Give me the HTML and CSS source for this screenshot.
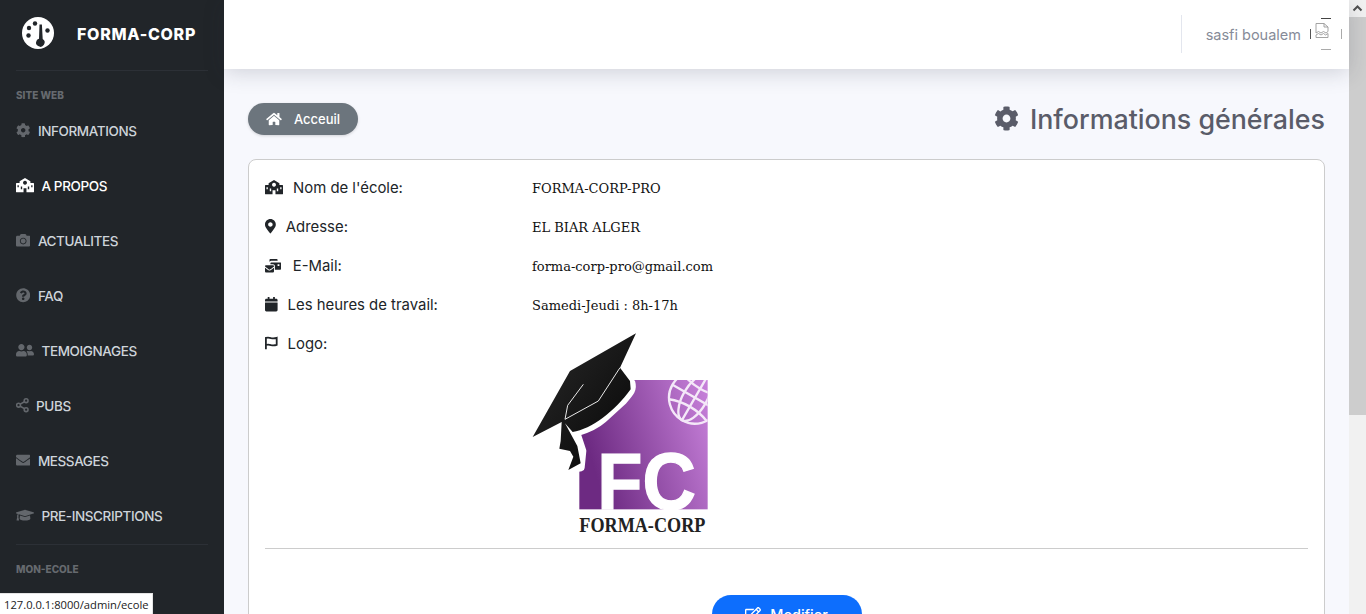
FILE: index.html
```html
<!DOCTYPE html>
<html>
<head>
	<title>Informations générales</title>
	<meta charset="UTF-8">
	<link rel="stylesheet" href="styles.css">
</head>
<body>
	<svg class="sprite">
		<symbol id="i-cog" viewBox="0 0 512 512"><path d="M487.4 315.7l-42.6-24.6c4.3-23.2 4.3-47 0-70.2l42.6-24.6c4.9-2.8 7.1-8.6 5.5-14-11.1-35.6-30-67.8-54.7-94.6-3.8-4.1-10-5.1-14.8-2.3L380.8 110c-17.9-15.4-38.5-27.3-60.8-35.1V25.8c0-5.6-3.9-10.5-9.4-11.7-36.7-8.2-74.3-7.8-109.2 0-5.5 1.2-9.4 6.1-9.4 11.7V75c-22.2 7.9-42.8 19.8-60.8 35.1L88.7 85.5c-4.9-2.8-11-1.9-14.8 2.3-24.7 26.7-43.6 58.9-54.7 94.6-1.7 5.4.6 11.2 5.5 14L67.3 221c-4.3 23.2-4.3 47 0 70.2l-42.6 24.6c-4.9 2.8-7.1 8.6-5.5 14 11.1 35.6 30 67.8 54.7 94.6 3.8 4.1 10 5.1 14.8 2.3l42.6-24.6c17.9 15.4 38.5 27.3 60.8 35.1v49.2c0 5.6 3.9 10.5 9.4 11.7 36.7 8.2 74.3 7.8 109.2 0 5.5-1.2 9.4-6.1 9.4-11.7v-49.2c22.2-7.9 42.8-19.8 60.8-35.1l42.6 24.6c4.9 2.8 11 1.9 14.8-2.3 24.7-26.7 43.6-58.9 54.7-94.6 1.5-5.5-.7-11.3-5.6-14.1zM256 336c-44.1 0-80-35.9-80-80s35.9-80 80-80 80 35.9 80 80-35.9 80-80 80z"/></symbol>
		<symbol id="i-school" viewBox="0 0 640 512"><path fill-rule="evenodd" d="M320 0L512 112V176H624a16 16 0 0 1 16 16V496a16 16 0 0 1-16 16H16a16 16 0 0 1-16-16V192a16 16 0 0 1 16-16H128V112zM320 96a70 70 0 1 0 .1 0zM268 368V512H372V368zM52 256V330H100V256zM540 256V330H588V256zM170 300V400H220V300zM420 300V400H470V300z"/></symbol>
	</svg>

	<aside class="sidebar">
		<div class="brand">
			<svg class="brand-logo" viewBox="0 0 32 32">
				<circle cx="16" cy="16" r="16" fill="#fff"/>
				<g fill="#212529">
					<circle cx="13" cy="6.500" r="2.200"/>
					<circle cx="7" cy="11" r="2.200"/>
					<circle cx="6.500" cy="18.500" r="2.200"/>
					<circle cx="25.500" cy="13.500" r="2.200"/>
					<path d="M17.500 7.500h2.400l.8 14.500a4.200 4.200 0 1 1-6 1.400c.6-1 1.600-1.500 2.300-1.700z"/>
				</g>
			</svg>
			<span class="brand-name">FORMA-CORP</span>
		</div>

		<div class="side-label">SITE WEB</div>
		<a class="side-link"><svg class="ico w-16"><use href="#i-cog"/></svg>INFORMATIONS</a>
		<a class="side-link active"><svg class="ico w-20"><use href="#i-school"/></svg>A PROPOS</a>
		<a class="side-link"><svg class="ico w-16" viewBox="0 0 512 512"><path d="M512 144v288c0 26.5-21.5 48-48 48H48c-26.5 0-48-21.5-48-48V144c0-26.5 21.5-48 48-48h88l12.3-32.9c7-18.7 24.9-31.1 44.9-31.1h125.5c20 0 37.9 12.4 44.9 31.1L376 96h88c26.5 0 48 21.5 48 48zM376 288c0-66.2-53.8-120-120-120s-120 53.8-120 120 53.8 120 120 120 120-53.8 120-120zm-32 0c0 48.5-39.5 88-88 88s-88-39.5-88-88 39.5-88 88-88 88 39.5 88 88z"/></svg>ACTUALITES</a>
		<a class="side-link"><svg class="ico w-16" viewBox="0 0 512 512"><path d="M504 256c0 136.997-111.043 248-248 248S8 392.997 8 256C8 119.083 119.043 8 256 8s248 111.083 248 248zM262.655 90c-54.497 0-89.255 22.957-116.549 63.758-3.536 5.286-2.353 12.415 2.715 16.258l34.699 26.31c5.205 3.947 12.621 3.008 16.665-2.122 17.864-22.658 30.113-35.797 57.303-35.797 20.429 0 45.698 13.148 45.698 32.958 0 14.976-12.363 22.667-32.534 33.976C247.128 238.528 216 254.941 216 296v4c0 6.627 5.373 12 12 12h56c6.627 0 12-5.373 12-12v-1.333c0-28.462 83.186-29.647 83.186-106.667 0-58.002-60.165-102-116.531-102zM256 338c-25.365 0-46 20.635-46 46 0 25.364 20.635 46 46 46s46-20.636 46-46c0-25.365-20.635-46-46-46z"/></svg>FAQ</a>
		<a class="side-link"><svg class="ico w-20" viewBox="0 0 640 512"><path d="M192 256c61.9 0 112-50.1 112-112S253.9 32 192 32 80 82.1 80 144s50.1 112 112 112zm76.8 32h-8.3c-20.8 10-43.9 16-68.5 16s-47.6-6-68.5-16h-8.3C51.6 288 0 339.6 0 403.2V432c0 26.5 21.5 48 48 48h288c26.5 0 48-21.5 48-48v-28.8c0-63.6-51.6-115.2-115.2-115.2zM480 256c53 0 96-43 96-96s-43-96-96-96-96 43-96 96 43 96 96 96zm48 32h-3.8c-13.9 4.8-28.6 8-44.2 8s-30.3-3.2-44.2-8H432c-20.4 0-39.2 5.9-55.7 15.4 24.4 26.3 39.7 61.2 39.7 99.8v38.4c0 2.2-.5 4.3-.6 6.4H592c26.5 0 48-21.5 48-48 0-61.9-50.1-112-112-112z"/></svg>TEMOIGNAGES</a>
		<a class="side-link"><svg class="ico ico-line w-14" viewBox="0 0 448 512" stroke="currentColor" stroke-width="56"><circle cx="360" cy="96" r="68"/><circle cx="90" cy="256" r="68"/><circle cx="360" cy="416" r="68"/><path d="M150 220L300 132M150 292l150 88"/></svg>PUBS</a>
		<a class="side-link"><svg class="ico w-16" viewBox="0 0 512 512"><path d="M502.3 190.8c3.9-3.1 9.7-.2 9.7 4.7V400c0 26.5-21.5 48-48 48H48c-26.5 0-48-21.5-48-48V195.6c0-5 5.7-7.8 9.7-4.7 22.4 17.4 52.1 39.5 154.1 113.6 21.1 15.4 56.7 47.8 92.2 47.6 35.7.3 72-32.8 92.3-47.6 102-74.1 131.6-96.3 154-113.7zM256 320c23.2.4 56.6-29.2 73.4-41.4 132.7-96.3 142.8-104.7 173.4-128.7 5.8-4.5 9.2-11.5 9.2-18.9v-19c0-26.5-21.5-48-48-48H48C21.5 64 0 85.5 0 112v19c0 7.4 3.4 14.3 9.2 18.9 30.6 23.9 40.7 32.4 173.4 128.7 16.8 12.2 50.2 41.8 73.4 41.4z"/></svg>MESSAGES</a>
		<a class="side-link"><svg class="ico w-20" viewBox="0 0 640 512"><path d="M622.34 153.2L343.4 67.5c-15.2-4.67-31.6-4.67-46.79 0L17.66 153.2c-23.54 7.23-23.54 38.36 0 45.59l48.63 14.94c-10.67 13.19-17.23 29.28-17.88 46.9C38.78 266.15 32 276.11 32 288c0 10.78 5.68 19.85 13.86 25.65L20.33 428.53C18.11 438.52 25.71 448 35.94 448h56.11c10.24 0 17.84-9.48 15.62-19.47L82.14 313.65C90.32 307.85 96 298.78 96 288c0-11.57-6.47-21.25-15.66-26.87.76-15.02 8.44-28.3 20.69-36.72L296.6 284.5c9.06 2.78 26.44 6.25 46.79 0l278.95-85.7c23.55-7.24 23.55-38.36 0-45.6zM352.79 315.09c-28.53 8.76-52.84 3.92-65.59 0l-145.02-44.55L128 384c0 35.35 85.96 64 192 64s192-28.65 192-64l-14.18-113.47-145.03 44.56z"/></svg>PRE-INSCRIPTIONS</a>
		<hr class="side-rule">
		<div class="side-label">MON-ECOLE</div>
	</aside>

	<div class="main">
		<header class="topbar">
			<div class="user">
				<span class="user-name">sasfi boualem</span>
				<svg class="avatar" viewBox="0 0 34 34">
					<path d="M13 1.500h10" stroke="#444"/>
					<path d="M13 32.500h10" stroke="#aaa"/>
					<path d="M2.500 12v10" stroke="#555"/>
					<path d="M33.500 12v10" stroke="#aaa"/>
					<path d="M8 6.500h8l4 3.500v4.500l-2 1.500-2.500-1.500-2.500 1.500-2.500-1.500-2.500 1.500zM16 6.500v3.500h4M8 18l2.500-1.500 2.500 1.500 2.500-1.500 2 1.500 2.500-1.500v4h-12z" fill="#fff" stroke="#9a9a9a" stroke-width=".9"/>
				</svg>
			</div>
		</header>

		<main class="content">
			<div class="page-head">
				<a class="crumb">
					<svg class="ico crumb-ico" viewBox="0 0 576 512"><path d="M280.37 148.26L96 300.11V464a16 16 0 0 0 16 16l112.06-.29a16 16 0 0 0 15.92-16V368a16 16 0 0 1 16-16h64a16 16 0 0 1 16 16v95.64a16 16 0 0 0 16 16.05L464 480a16 16 0 0 0 16-16V300L295.67 148.26a12.19 12.19 0 0 0-15.3 0zM571.6 251.47L488 182.56V44.05a12 12 0 0 0-12-12h-56a12 12 0 0 0-12 12v72.61L318.47 43a48 48 0 0 0-61 0L4.34 251.47a12 12 0 0 0-1.6 16.9l25.5 31A12 12 0 0 0 45.15 301l235.22-193.74a12.19 12.19 0 0 1 15.3 0L530.9 301a12 12 0 0 0 16.9-1.6l25.5-31a12 12 0 0 0-1.7-16.93z"/></svg>
					Acceuil
				</a>
				<h1 class="page-title"><svg class="ico title-ico"><use href="#i-cog"/></svg>Informations générales</h1>
			</div>

			<section class="card">
				<div class="info-row">
					<div class="info-label"><svg class="ico w-20"><use href="#i-school"/></svg>Nom de l'école:</div>
					<div class="info-value">FORMA-CORP-PRO</div>
				</div>
				<div class="info-row">
					<div class="info-label"><svg class="ico w-12" viewBox="0 0 384 512"><path d="M172.268 501.67C26.97 291.031 0 269.413 0 192 0 85.961 85.961 0 192 0s192 85.961 192 192c0 77.413-26.97 99.031-172.268 309.67-9.535 13.774-29.93 13.773-39.464 0zM192 272c44.183 0 80-35.817 80-80s-35.817-80-80-80-80 35.817-80 80 35.817 80 80 80z"/></svg>Adresse:</div>
					<div class="info-value">EL BIAR ALGER</div>
				</div>
				<div class="info-row">
					<div class="info-label wide-gap"><svg class="ico w-18" viewBox="0 0 576 512"><path d="M160 448c-25.600 0-51.200-22.400-64-32-64-44.800-83.200-60.800-96-70.400V480c0 17.670 14.330 32 32 32h256c17.670 0 32-14.330 32-32V345.600c-12.800 9.600-32 25.600-96 70.400-12.800 9.600-38.400 32-64 32zm128-192H32c-17.670 0-32 14.330-32 32v16c25.600 19.200 22.400 19.200 115.200 86.400 9.600 6.400 28.800 25.600 44.800 25.600s35.200-19.200 44.800-22.400c92.800-67.200 89.600-67.200 115.200-89.600V288c0-17.670-14.330-32-32-32zm256-96H224c-17.670 0-32 14.330-32 32v32h96c33.210 0 60.590 25.420 63.710 57.820l.29-.220V416h192c17.670 0 32-14.330 32-32V192c0-17.670-14.330-32-32-32zm-32 128h-64v-64h64v64zM160 160c0-35.300 28.700-64 64-64h224V64c0-17.670-14.330-32-32-32H192c-17.670 0-32 14.330-32 32z"/></svg>E-Mail:</div>
					<div class="info-value">forma-corp-pro@gmail.com</div>
				</div>
				<div class="info-row">
					<div class="info-label"><svg class="ico w-14" viewBox="0 0 448 512"><path d="M12 192h424c6.600 0 12 5.400 12 12v260c0 26.500-21.500 48-48 48H48c-26.500 0-48-21.500-48-48V204c0-6.600 5.400-12 12-12zm436-44v-36c0-26.500-21.500-48-48-48h-48V12c0-6.600-5.400-12-12-12h-40c-6.600 0-12 5.400-12 12v52H160V12c0-6.600-5.400-12-12-12h-40c-6.600 0-12 5.400-12 12v52H48C21.500 64 0 85.500 0 112v36c0 6.600 5.400 12 12 12h424c6.600 0 12-5.400 12-12z"/></svg>Les heures de travail:</div>
					<div class="info-value">Samedi-Jeudi : 8h-17h</div>
				</div>
				<div class="info-row logo-row">
					<div class="info-label"><svg class="ico ico-line w-14" viewBox="0 0 448 512" stroke="currentColor" stroke-width="64"><path d="M32 470V70c60-20 120-12 186 4 70 14 130 10 198-10v250c-66 20-128 24-198 10-70-18-126-26-186-4"/></svg>Logo:</div>
					<div class="info-value">
						<svg class="logo-pic" viewBox="36 21 528 609">
							<defs>
								<linearGradient id="fc-grad" x1="0" x2="1" y1="0.3" y2="0">
									<stop offset="0" stop-color="#6d2a82"/>
									<stop offset="1" stop-color="#c882db"/>
								</linearGradient>
								<linearGradient id="cap-grad" x1="0" x2="1" y1="0" y2="1">
									<stop offset="0" stop-color="#2a2a2a"/>
									<stop offset="1" stop-color="#050505"/>
								</linearGradient>
								<clipPath id="fc-clip"><rect x="178" y="162" width="385" height="388"/></clipPath>
							</defs>
							<rect x="178" y="162" width="385" height="388" fill="url(#fc-grad)"/>
							<g clip-path="url(#fc-clip)">
								<g transform="rotate(30 525 215)" fill="none" stroke="#f4e8f8" stroke-width="7">
									<circle cx="525" cy="215" r="78"/>
									<ellipse cx="525" cy="215" rx="36" ry="78"/>
									<path d="M447 215h156M525 137v156M460 172c40 16 90 16 130 0M460 258c40-16 90-16 130 0"/>
								</g>
							</g>
							<path d="M300 125l35 45c6 20-3 30-25 55l-60 55c-25 22-55 33-80 40l18 55 -5 50-38 7 12-70-32-30z" fill="#fff" stroke="#fff" stroke-width="22" stroke-linejoin="round"/>
							<path d="M348 22L150 135 38 333 125 288 122 345 118 368 150 375 160 392 145 432 182 412 172 360 135 292 158 318C215 310 285 255 332 190L330 165 300 125z" fill="url(#cap-grad)"/>
							<path d="M190 175L143 238 135 280 235 225 300 125" fill="none" stroke="#e8e8e8" stroke-width="3"/>
							<text class="logo-fc" x="232" y="550" textLength="296" lengthAdjust="spacingAndGlyphs">FC</text>
							<text class="logo-name" x="178" y="618" textLength="378" lengthAdjust="spacingAndGlyphs">FORMA-CORP</text>
						</svg>
					</div>
				</div>
				<hr class="card-rule">
				<div class="card-actions">
					<a class="btn-edit"><svg class="ico btn-ico" viewBox="0 0 576 512"><path d="M402.3 344.900l32-32c5-5 13.700-1.500 13.700 5.700V464c0 26.500-21.500 48-48 48H48c-26.500 0-48-21.500-48-48V112c0-26.500 21.500-48 48-48h273.500c7.100 0 10.700 8.600 5.700 13.700l-32 32c-1.500 1.500-3.500 2.300-5.700 2.300H48v352h352V350.500c0-2.100.8-4.100 2.300-5.600zm156.600-201.800L296.300 405.700l-90.400 10c-26.200 2.900-48.500-19.200-45.600-45.600l10-90.400L432.900 17.100c22.900-22.900 59.900-22.900 82.700 0l43.200 43.200c22.900 22.900 22.900 60 .1 82.800zM460.100 174L402 115.900 216.200 301.800l-7.300 65.300 65.300-7.300L460.100 174zm64.800-79.700l-43.200-43.200c-4.100-4.100-10.800-4.100-14.800 0L436 82l58.100 58.100 30.900-30.900c4-4.200 4-10.800-.1-14.900z"/></svg>Modifier</a>
				</div>
			</section>
		</main>
	</div>

	<div class="scrollbar">
		<div class="scroll-up"><svg viewBox="0 0 17 17" fill="none" stroke="#505050" stroke-width="2"><path d="M4.500 10.500l4-4 4 4"/></svg></div>
		<div class="scroll-thumb"></div>
	</div>

	<div class="status-bubble">127.0.0.1:8000/admin/ecole</div>
</body>
</html>
```

FILE: styles.css
```css
* {
	box-sizing: border-box;
}

html, body {
	height: 100%;
}

body {
	margin: 0;
	display: flex;
	overflow: hidden;
	background-color: #f7f8fd;
	font-family: "Inter", "Liberation Sans", sans-serif;
}

.sprite {
	display: none;
}

.ico {
	height: 14.4px;
	fill: currentColor;
	flex-shrink: 0;
}

.ico-line {
	fill: none;
}

.w-12 { width: 10.8px; }
.w-14 { width: 12.6px; }
.w-16 { width: 14.4px; }
.w-18 { width: 16.2px; }
.w-20 { width: 18px; }

/* sidebar */
.sidebar {
	width: 224px;
	flex-shrink: 0;
	padding: 0 16px;
	background-color: #212529;
	overflow: hidden;
}

.brand {
	height: 71px;
	display: flex;
	align-items: center;
	padding-left: 6px;
	border-bottom: 1px solid #2c3036;
}

.brand-logo {
	width: 32px;
	height: 32px;
	margin-top: -5px;
}

.brand-name {
	margin-left: 23px;
	margin-top: -2px;
	font-size: 16px;
	font-weight: 800;
	color: #fff;
	letter-spacing: 0.700px;
}

.side-label {
	height: 32px;
	line-height: 49px;
	font-size: 10px;
	font-weight: 800;
	color: #666a6f;
}

.side-rule {
	margin: 1px 0 0;
	border: 0;
	border-top: 1px solid #2c3036;
}

.side-rule + .side-label {
	height: auto;
	line-height: 49px;
}

.side-link {
	height: 55px;
	display: flex;
	align-items: center;
	gap: 7.500px;
	font-size: 13.500px;
	font-weight: 500;
	letter-spacing: -0.400px;
	color: #ced4da;
}

.side-link .ico {
	color: #63676c;
}

.side-link.active,
.side-link.active .ico {
	color: #fff;
}

/* main column */
.main {
	flex: 1;
	min-width: 0;
	display: flex;
	flex-direction: column;
}

.topbar {
	position: relative;
	height: 69px;
	flex-shrink: 0;
	display: flex;
	justify-content: flex-end;
	align-items: center;
	background-color: #fff;
	box-shadow: 0 4px 20px rgba(40, 45, 60, 0.18);
}

.user {
	height: 38px;
	display: flex;
	align-items: center;
	margin-right: 7px;
	margin-top: -1px;
	padding-left: 24px;
	border-left: 1px solid #e3e6ee;
}

.user-name {
	font-size: 14.500px;
	color: #868b98;
}

.avatar {
	width: 34px;
	height: 34px;
	margin-left: 7px;
	fill: none;
}

.content {
	padding: 34px 24px 0;
}

.page-head {
	display: flex;
	justify-content: space-between;
	align-items: center;
	height: 32px;
}

.crumb {
	width: 110px;
	height: 32px;
	display: flex;
	align-items: center;
	gap: 12px;
	padding-left: 18px;
	border-radius: 16px;
	background-color: #6c757d;
	box-shadow: 0 1px 3px rgba(0, 0, 0, 0.15);
	font-size: 13px;
	font-weight: 500;
	color: #fff;
}

.crumb-ico {
	width: 16px;
	height: 14px;
}

.page-title {
	margin: -1px 0 0;
	display: flex;
	align-items: center;
	gap: 11px;
	font-size: 26.800px;
	font-weight: 500;
	color: #5a5c69;
}

.title-ico {
	width: 25px;
	height: 25px;
}

.card {
	margin-top: 24px;
	padding: 9px 16px 0;
	background-color: #fff;
	border: 1px solid #ccc;
	border-radius: 8px;
}

.info-row {
	display: grid;
	grid-template-columns: 267px 1fr;
	height: 39px;
	align-items: start;
	padding-top: 9px;
}

.info-label {
	display: flex;
	align-items: center;
	gap: 10px;
	height: 21px;
	margin-top: -1px;
	font-size: 14.900px;
	color: #212529;
}

.info-label.wide-gap {
	gap: 11.500px;
}

.info-value {
	height: 21px;
	line-height: 21px;
	font-family: "DejaVu Serif", "Liberation Serif", serif;
	font-size: 13px;
	color: #111;
}

.info-row.logo-row {
	height: 223px;
}

.logo-pic {
	display: block;
	width: 176px;
	height: 203px;
	margin-top: -1px;
}

.logo-fc {
	font-family: "Liberation Sans", sans-serif;
	font-size: 237px;
	font-weight: 700;
	fill: #fff;
	stroke: #fff;
	stroke-width: 4px;
}

.logo-name {
	font-family: "Liberation Serif", serif;
	font-size: 60px;
	font-weight: 700;
	fill: #222;
}

.card-rule {
	margin: 0;
	border: 0;
	border-top: 1px solid #ccc;
}

.card-actions {
	display: flex;
	justify-content: center;
	padding-top: 46px;
	padding-bottom: 20px;
}

.btn-edit {
	width: 150px;
	height: 38px;
	display: flex;
	justify-content: center;
	align-items: center;
	gap: 9px;
	border-radius: 19px;
	background-color: #0d6efd;
	font-size: 14.400px;
	font-weight: 500;
	color: #fff;
}

.btn-ico {
	width: 16px;
}

/* window chrome drawn over the page */
.scrollbar {
	width: 17px;
	flex-shrink: 0;
	background-color: #f1f1f1;
}

.scroll-up {
	height: 17px;
}

.scroll-up svg {
	display: block;
}

.scroll-thumb {
	height: 398px;
	background-color: #cdcdcd;
}

.status-bubble {
	position: fixed;
	left: 0;
	bottom: 0;
	width: 153px;
	height: 21px;
	padding-left: 4px;
	line-height: 22px;
	background-color: #fff;
	border-top: 1px solid #e4e4e4;
	border-right: 1px solid #e4e4e4;
	font-family: "Open Sans", sans-serif;
	font-size: 11.200px;
	color: #222;
	white-space: nowrap;
}
```
